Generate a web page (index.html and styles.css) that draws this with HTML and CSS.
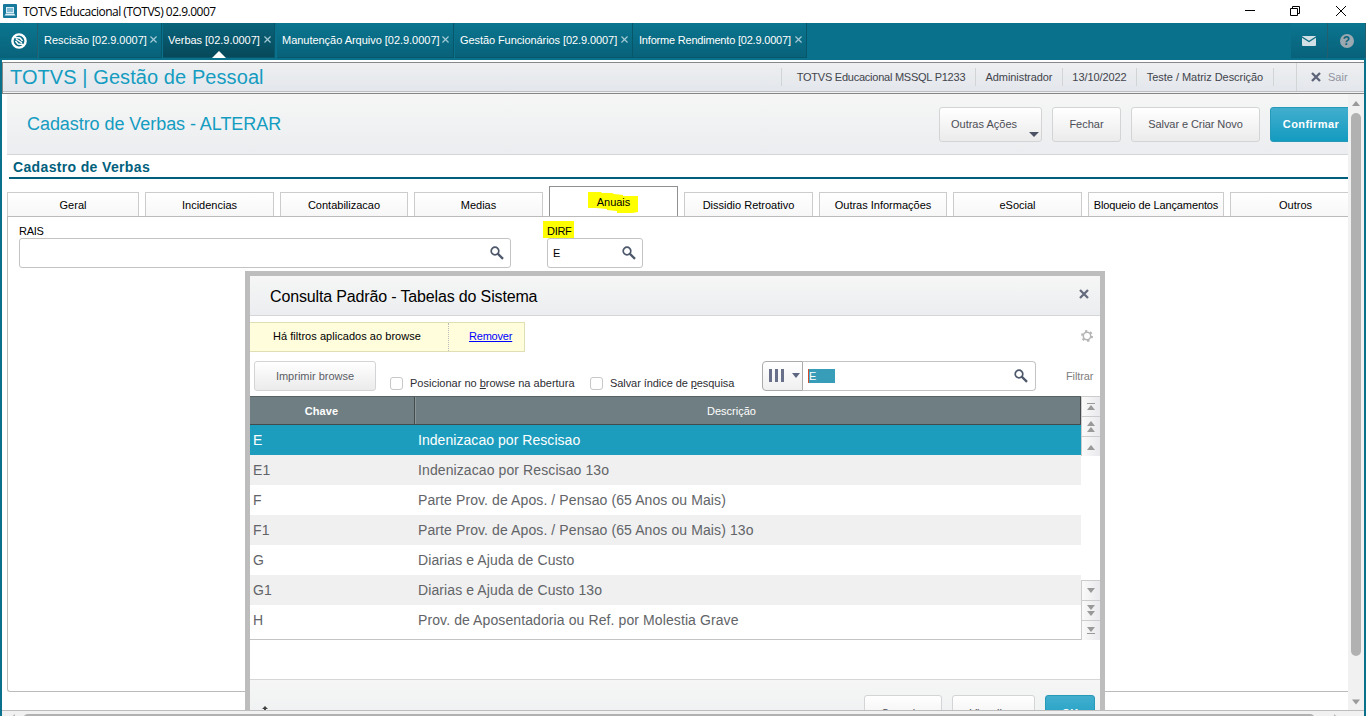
FILE: index.html
```html
<!DOCTYPE html>
<html lang="pt-BR">
<head>
<meta charset="utf-8">
<title>TOTVS Educacional (TOTVS) 02.9.0007</title>
<link rel="stylesheet" href="styles.css">
</head>
<body>
<svg class="defs" width="0" height="0">
  <symbol id="lens" viewBox="0 0 14 14"><circle cx="5" cy="5" r="3.8" fill="none" stroke="#4d586b" stroke-width="1.7"/><path d="M7.700 7.700 13 12.800" stroke="#4d586b" stroke-width="2.300"/></symbol>
  <symbol id="cross" viewBox="0 0 10 10"><path d="M1 1 9 9M9 1 1 9" stroke="currentColor" stroke-width="2.300" fill="none"/></symbol>
  <symbol id="x" viewBox="0 0 6 6"><path d="M.4 .4 5.6 5.6M5.6 .4 .4 5.6" stroke="#a3cad6" stroke-width="1" fill="none"/></symbol>
  <symbol id="up" viewBox="0 0 8 5"><path d="M0 5 4 0 8 5z" fill="#999"/></symbol>
  <symbol id="down" viewBox="0 0 8 5"><path d="M0 0 4 5 8 0z" fill="#999"/></symbol>
</svg>
<div class="window">
  <header class="titlebar">
    <svg class="app-icon" width="14" height="14" viewBox="0 0 14 14"><rect width="14" height="14" rx="1" fill="#16799b"/><rect x="3.500" y="3.500" width="7" height="5" fill="#7db9d3" stroke="#d7eef8"/><path d="M3 9.500h8l1.500 2h-11z" fill="#e3f3f9"/></svg>
    <span class="title">TOTVS Educacional (TOTVS) 02.9.0007</span>
    <svg class="controls" width="110" height="14" viewBox="0 0 110 14" fill="none" stroke="#000"><path d="M0 7.500h10M45.500 5.500h7v7h-7zM47.500 5.500v-2h7v7h-2M91 3l10 10M101 3 91 13"/></svg>
  </header>

  <nav class="taskbar">
    <div class="home"><svg width="16" height="16" viewBox="0 0 16 16"><circle cx="8" cy="8" r="6.600" fill="none" stroke="#fff" stroke-width="2.400"/><path d="M4 4.500 9 5 11.500 8M12 11.500 7 11 4.500 8M5 6 11 10" fill="none" stroke="#fff" stroke-width="1.500"/></svg></div>
    <div class="task t1"><span>Rescisão [02.9.0007]</span><svg width="7" height="7"><use href="#x"/></svg></div>
    <div class="task t2 current"><span>Verbas [02.9.0007]</span><svg width="7" height="7"><use href="#x"/></svg></div>
    <div class="task t3"><span>Manutenção Arquivo [02.9.0007]</span><svg width="7" height="7"><use href="#x"/></svg></div>
    <div class="task t4"><span>Gestão Funcionários [02.9.0007]</span><svg width="7" height="7"><use href="#x"/></svg></div>
    <div class="task t5"><span>Informe Rendimento [02.9.0007]</span><svg width="7" height="7"><use href="#x"/></svg></div>
    <div class="tool mail"><svg width="14" height="10" viewBox="0 0 14 10"><rect width="14" height="10" rx="1" fill="#d2e0e6"/><path d="M0 1 7 5.500 14 1" fill="none" stroke="#08697f" stroke-width="1.200"/></svg></div>
    <div class="tool help"><span>?</span></div>
  </nav>

  <div class="module">
    <h1>TOTVS | Gestão de Pessoal</h1>
    <span class="info i1">TOTVS Educacional MSSQL P1233</span>
    <span class="info i2">Administrador</span>
    <span class="info i3">13/10/2022</span>
    <span class="info i4">Teste / Matriz Descrição</span>
    <span class="info gap"></span>
    <span class="exit"><svg width="10" height="10"><use href="#cross"/></svg><span>Sair</span></span>
  </div>

  <div class="workspace">
    <main class="content">
      <section class="heading">
        <h2>Cadastro de Verbas - ALTERAR</h2>
        <button class="btn b1">Outras Ações<i class="caret"></i></button>
        <button class="btn b2">Fechar</button>
        <button class="btn b3">Salvar e Criar Novo</button>
        <button class="btn primary b4">Confirmar</button>
      </section>
      <h3>Cadastro de Verbas</h3>
      <div class="tabs">
        <div class="tab w132">Geral</div>
        <div class="tab">Incidencias</div>
        <div class="tab w128">Contabilizacao</div>
        <div class="tab">Medias</div>
        <div class="tab active"><svg class="mark" width="50" height="22" viewBox="0 0 50 22"><path d="M0 0H13L14 1H24L26 2 35 3V4H50V20L44 21H29V19L19 18V17L8 16H0z" fill="#ff0"/></svg><span>Anuais</span></div>
        <div class="tab">Dissidio Retroativo</div>
        <div class="tab w128">Outras Informações</div>
        <div class="tab">eSocial</div>
        <div class="tab w136 tight">Bloqueio de Lançamentos</div>
        <div class="tab w131">Outros</div>
      </div>
      <div class="panel">
        <div class="field rais"><label>RAIS</label><div class="input"><svg width="14" height="14"><use href="#lens"/></svg></div></div>
        <div class="field dirf"><label><span class="marked">DIRF</span></label><div class="input"><span>E</span><svg width="14" height="14"><use href="#lens"/></svg></div></div>
      </div>
    </main>
    <aside class="vscroll"><svg width="8" height="5"><use href="#up"/></svg><i class="thumb"></i><svg width="8" height="6"><use href="#down"/></svg></aside>

    <section class="dialog">
      <div class="dialog-head"><span>Consulta Padrão - Tabelas do Sistema</span><svg width="10" height="10"><use href="#cross"/></svg></div>
      <div class="notice-row">
        <div class="notice"><span class="msg">Há filtros aplicados ao browse</span><a>Remover</a></div>
        <svg class="gear" width="12" height="12" viewBox="0 0 12 12" fill="none" stroke="#b5b5b5"><circle cx="6" cy="6" r="3.700" stroke-width="1.500"/><circle cx="6" cy="6" r="5" stroke-width="2" stroke-dasharray="2.236 3"/></svg>
      </div>
      <div class="tools">
        <button class="btn print">Imprimir browse</button>
        <i class="check"></i><span class="opt o1">Posicionar no <u>b</u>rowse na abertura</span>
        <i class="check"></i><span class="opt o2">Salvar índice de <u>p</u>esquisa</span>
        <div class="search"><div class="picker"><i></i><i></i><i></i><svg width="8" height="5" viewBox="0 0 8 5"><path d="M0 0 4 5 8 0z" fill="#5d6780"/></svg></div><div class="query"><mark>E</mark><svg width="14" height="14"><use href="#lens"/></svg></div></div>
        <span class="filter">Filtrar</span>
      </div>
      <div class="grid">
        <div class="table">
          <div class="thead"><b>Chave</b><span>Descrição</span></div>
          <div class="row selected"><span>E</span><span>Indenizacao por Rescisao</span></div>
          <div class="row"><span>E1</span><span>Indenizacao por Rescisao 13o</span></div>
          <div class="row"><span>F</span><span>Parte Prov. de Apos. / Pensao (65 Anos ou Mais)</span></div>
          <div class="row"><span>F1</span><span>Parte Prov. de Apos. / Pensao (65 Anos ou Mais) 13o</span></div>
          <div class="row"><span>G</span><span>Diarias e Ajuda de Custo</span></div>
          <div class="row"><span>G1</span><span>Diarias e Ajuda de Custo 13o</span></div>
          <div class="row"><span>H</span><span>Prov. de Aposentadoria ou Ref. por Molestia Grave</span></div>
        </div>
        <div class="pager">
          <div class="step"><i class="bar"></i><svg width="8" height="5"><use href="#up"/></svg></div>
          <div class="step"><svg width="8" height="5"><use href="#up"/></svg><svg width="8" height="5"><use href="#up"/></svg></div>
          <div class="step low"><svg width="8" height="5"><use href="#up"/></svg></div>
          <div class="space"></div>
          <div class="step"><svg width="8" height="5"><use href="#down"/></svg></div>
          <div class="step"><svg width="8" height="5"><use href="#down"/></svg><svg width="8" height="5"><use href="#down"/></svg></div>
          <div class="step"><svg width="8" height="5"><use href="#down"/></svg><i class="bar"></i></div>
        </div>
      </div>
      <footer class="dialog-foot">
        <svg class="pin" width="6" height="12" viewBox="0 0 6 12"><path d="M3 0 6 3H4V12H2V3H0z" fill="#444"/></svg>
        <button class="btn f1">Cancelar</button><button class="btn f2">Visualizar</button><button class="btn primary f3">OK</button>
      </footer>
    </section>
  </div>
  <div class="hscroll"><svg width="5" height="8" viewBox="0 0 5 8"><path d="M0 4 5 0V8z" fill="#bbb"/></svg><i></i><svg width="5" height="8" viewBox="0 0 5 8"><path d="M5 4 0 0V8z" fill="#bbb"/></svg></div>
</div>
</body>
</html>
```
FILE: styles.css
```css
* { box-sizing: border-box; }
body { margin: 0; font: 11px "Liberation Sans", Arial, sans-serif; color: #000; }
h1, h2, h3 { margin: 0; font-weight: normal; white-space: nowrap; }
svg { display: block; flex: none; }
.defs { position: absolute; }
.window { display: flex; flex-direction: column; width: 1366px; height: 716px; overflow: hidden; background: #0a718d; }

.titlebar { display: flex; align-items: center; flex: none; height: 23px; background: #fff; }
.app-icon { margin: 0 0 2px 3px; }
.title { margin-left: 6px; font: 12px/23px "Open Sans", sans-serif; letter-spacing: -.5px; white-space: nowrap; }
.controls { margin-left: auto; margin-right: 11px; margin-bottom: 4px; }

.taskbar { display: flex; flex: none; height: 37px; background: #0a718d; }
.home { display: flex; align-items: center; width: 38px; height: 35px; padding-left: 11px; border-right: 1px solid #245d6e; background: linear-gradient(#0b7590, #08637a); }
.task { position: relative; display: flex; flex: none; height: 35px; padding: 0 4px 0 5px; border-right: 1px solid #07566a; border-bottom: 1px solid #07566a; background: linear-gradient(#0b7590, #086279); color: #fff; line-height: 35px; white-space: nowrap; justify-content: space-between; letter-spacing: -.03px; }
.task svg { margin-top: 13px; }
.task.current { background: linear-gradient(#09637a, #06495a); }
.task.current::after { content: ""; position: absolute; left: 49px; bottom: -1px; border: 7px solid transparent; border-top: 0; border-bottom-color: #fff; }
.t1 { width: 123px; margin-left: 1px; }
.t2 { width: 112px; margin-left: 1px; padding-right: 3px; }
.t3 { width: 177px; margin-left: 2px; }
.t4 { width: 178px; margin-left: 1px; letter-spacing: -.08px; }
.t5 { width: 174px; padding-left: 6px; letter-spacing: -.2px; }
.tool { display: flex; align-items: center; justify-content: center; width: 37px; height: 35px; background: linear-gradient(#0b7590, #08617a); border-right: 1px solid #245d6e; }
.mail { margin-left: auto; }
.help { width: 38px; }
.help span { width: 14px; height: 14px; border-radius: 50%; background: #9aa9b1; color: #08617a; font-weight: bold; font-size: 12px; line-height: 14px; text-align: center; }

.module { display: flex; align-items: center; flex: none; height: 34px; margin: 0 2px; padding-bottom: 3px; border-top: 2px solid #fff; background: linear-gradient(#eef0f1, #e2e5eb); box-shadow: inset 1px 1px #888, inset 0 -1px #858585, inset 0 -2px #f2f2f2, inset 0 -3px #bcbfc3; }
.module h1 { flex: 1; padding-left: 8px; font-size: 20px; line-height: 28px; color: #149cc1; letter-spacing: .08px; }
.info { flex: none; height: 18px; border-left: 1px solid #d2d5d5; color: #42444c; line-height: 18px; text-align: center; white-space: nowrap; }
.i1 { width: 194px; padding-left: 5px; letter-spacing: -.24px; }
.i2 { width: 87px; letter-spacing: -.08px; }
.i3 { width: 74px; letter-spacing: -.08px; }
.i4 { width: 137px; letter-spacing: -.04px; }
.gap { width: 23px; }
.exit { display: flex; align-items: center; gap: 7px; width: 68px; height: 28px; padding-left: 14px; border-left: 1px solid #d2d5d5; color: #9093a0; }
.exit svg { color: #5d6378; }

.workspace { position: relative; display: flex; flex: none; height: 616px; margin: 0 2px; background: #fff; overflow: hidden; }
.content { width: 1346px; padding-left: 5px; overflow: hidden; }
.heading { display: flex; align-items: center; height: 61px; padding-left: 20px; border-bottom: 1px solid #d5d6d8; background: linear-gradient(#f5f6f5, #ecedf0); overflow: hidden; }
.heading h2 { flex: 1; font-size: 18px; color: #149cc1; letter-spacing: -.06px; }
.btn { position: relative; flex: none; height: 35px; margin: 0; padding: 0; border: 1px solid #d3d4d6; border-radius: 3px; background: linear-gradient(#fff, #ebebeb); color: #4c4e56; font: 11px "Liberation Sans", Arial, sans-serif; white-space: nowrap; }
.primary { border-color: #2799b9; background: linear-gradient(#42aece, #139bc0); color: #fff; font-weight: bold; }
.b1 { width: 103px; padding-right: 13px; }
.caret { position: absolute; right: 2px; bottom: 4px; border: 5px solid transparent; border-top-color: #4c5365; border-bottom: 0; }
.b2 { width: 69px; margin-left: 10px; }
.b3 { width: 129px; margin-left: 10px; letter-spacing: -.08px; }
.b4 { width: 82px; margin: 0 -4px 0 10px; letter-spacing: .42px; }
h3 { height: 24px; margin-left: 2px; padding-left: 4px; border-bottom: 2px solid #00607c; color: #00607c; font-size: 14px; font-weight: bold; line-height: 25px; letter-spacing: .35px; }

.tabs { display: flex; align-items: flex-end; gap: 6px; height: 38px; width: 1400px; border-bottom: 1px solid #bbb; }
.tab { position: relative; display: flex; align-items: center; justify-content: center; flex: none; width: 129px; height: 24px; padding-top: 1px; border: 1px solid #ccc; border-bottom: 0; background: linear-gradient(#fff, #f7f7f7); white-space: nowrap; }
.tab.active { height: 30px; border-color: #919191; background: #fff; }
.tab span { position: relative; }
.mark { position: absolute; left: 38px; top: 5px; }
.tight { letter-spacing: -.12px; }
.w132 { width: 132px; }
.w131 { width: 131px; }
.w128 { width: 128px; }
.w136 { width: 136px; }
.panel { display: flex; height: 475px; width: 1400px; padding: 8px 11px; border: solid #bbb; border-width: 0 0 1px 1px; border-radius: 0 0 0 3px; }
.field label { display: block; height: 13px; line-height: 13px; letter-spacing: -.3px; }
.rais { width: 492px; margin-right: 36px; }
.dirf { width: 96px; }
.input { display: flex; align-items: center; height: 30px; padding: 0 6px 1px 5px; border: 1px solid #c3c3c3; border-radius: 3px; background: #fff; }
.input span { padding-top: 1px; }
.input svg { margin-left: auto; }
.marked { display: inline-block; margin: -5px 0 0 -4px; padding: 4px 3px 0 4px; height: 17px; background: #ff0; }

.vscroll { display: flex; flex-direction: column; align-items: center; width: 16px; padding-top: 7px; background: #f1f1f1; }
.thumb { width: 10px; height: 543px; margin: 7px 0 43px; border-radius: 5px; background: #b1b1b1; }
.hscroll { display: flex; flex: none; height: 16px; margin: 0 2px; padding: 3px 25px 0 8px; border-top: 1px solid #bdbdbd; background: #f1f1f1; }
.hscroll i { flex: 1; height: 10px; margin: 0 19px 0 8px; border-radius: 5px; background: #b1b1b1; }

.dialog { position: absolute; left: 243px; top: 177px; width: 860px; height: 480px; border: 5px solid #bdbdbd; background: #fff; }
.dialog-head { display: flex; align-items: center; justify-content: space-between; height: 40px; padding: 0 11px 0 20px; border-bottom: 1px solid #d5d6d8; background: linear-gradient(#f5f6f5, #ecedf0); font-size: 16px; letter-spacing: -.15px; }
.dialog-head span { padding-top: 2px; }
.dialog-head svg { color: #666c7d; margin-bottom: 3px; }
.notice-row { display: flex; height: 45px; padding-top: 6px; justify-content: space-between; }
.notice { display: flex; width: 275px; height: 30px; border: 1px solid #dee0b4; border-left: 0; background: #fffddc; line-height: 26px; }
.msg { width: 199px; padding-left: 23px; border-right: 1px dotted #bbb; white-space: nowrap; letter-spacing: .04px; }
.notice a { padding-left: 20px; color: #00f; text-decoration: underline; letter-spacing: -.2px; }
.gear { margin: 8px 7px 0 0; }
.tools { display: flex; height: 35px; padding-left: 4px; }
.print { width: 122px; height: 30px; margin-right: 14px; color: #5b5d65; }
.check { flex: none; width: 13px; height: 13px; margin-top: 16px; border: 1px solid #c6c6c6; border-radius: 3px; }
.opt { flex: none; margin-left: 7px; padding-top: 15px; color: #2d2e33; line-height: 14px; white-space: nowrap; }
.o1 { width: 180px; }
.o2 { width: 152px; letter-spacing: -.07px; }
.search { display: flex; flex: none; width: 274px; height: 30px; }
.picker { display: flex; align-items: center; width: 41px; padding: 0 0 2px 6px; border: 1px solid #aaa; border-radius: 4px 0 0 4px; background: linear-gradient(#fff, #f0f0f0); }
.picker i { width: 3px; height: 13px; margin-right: 3px; background: #68708a; }
.picker svg { margin-left: 5px; }
.query { display: flex; align-items: center; flex: 1; padding: 0 7px 1px 5px; border: 1px solid #c3c3c3; border-left: 0; border-radius: 0 4px 4px 0; }
.query mark { width: 27px; height: 14px; border-left: 1px solid #d44e2a; background: #389db8; color: #fff; line-height: 14px; }
.query svg { margin-left: auto; }
.filter { margin-left: 30px; padding-top: 9px; color: #808080; letter-spacing: -.1px; }
.grid { display: flex; height: 244px; }
.table { width: 831px; border-bottom: 1px solid #c4c4c4; }
.thead { display: flex; height: 29px; border-top: 1px solid #586264; border-bottom: 1px solid #454b4d; background: #6f7e82; color: #fff; line-height: 29px; text-align: center; }
.thead b { width: 165px; padding-right: 21px; border-right: 1px solid #454b4d; letter-spacing: .1px; }
.thead span { flex: 1; padding-right: 33px; border-left: 1px solid #899698; border-right: 1px solid #454b4d; }
.row { display: flex; height: 30px; color: #626468; font-size: 14px; line-height: 30px; letter-spacing: .1px; white-space: nowrap; }
.row span:first-child { width: 168px; padding-left: 3px; }
.row:nth-child(odd) { background: #f0f0f0; }
.row.selected { background: #1d9dbe; color: #fff; letter-spacing: .05px; }
.pager { display: flex; flex-direction: column; flex: 1; }
.step { display: flex; flex-direction: column; align-items: center; justify-content: center; gap: 1px; height: 20px; border: solid #ccc; border-width: 1px 0 0 1px; background: linear-gradient(90deg, #fafafa, #e9e9ed); }
.bar { width: 8px; height: 1px; background: #999; }
.low { padding-top: 2px; }
.space { flex: 1; }
.dialog-foot { display: flex; height: 60px; margin-top: 39px; padding: 15px 5px 0 12px; border-top: 1px solid #d5d6d8; background: linear-gradient(#f5f6f5, #ecedf0); }
.pin { margin: 11px auto 0 0; }
.f1 { width: 78px; }
.f2 { width: 83px; margin-left: 10px; }
.f3 { width: 50px; margin-left: 10px; }
```
